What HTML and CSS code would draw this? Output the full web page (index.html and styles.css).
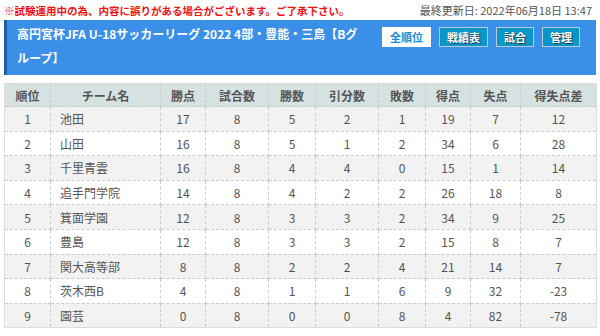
FILE: index.html
```html
<!DOCTYPE html>
<html lang="ja">
<head>
<meta charset="utf-8">
<link rel="stylesheet" href="styles.css">
</head>
<body>
<div class="page">
  <div class="topline">
    <span class="notice">※試験運用中の為、内容に誤りがある場合がございます。ご了承下さい。</span>
    <span class="updated">最終更新日: 2022年06月18日 13:47</span>
  </div>
  <div class="titlebox">
    <h1 class="title">高円宮杯JFA U-18サッカーリーグ 2022 4部・豊能・三島【Bグループ】</h1>
    <div class="btns">
      <span class="btn btn-active">全順位</span>
      <span class="btn">戦績表</span>
      <span class="btn">試合</span>
      <span class="btn">管理</span>
    </div>
  </div>
  <table class="standings">
    <colgroup>
      <col class="c1"><col class="c2"><col class="c3"><col class="c4"><col class="c5">
      <col class="c6"><col class="c7"><col class="c8"><col class="c9"><col class="c10">
    </colgroup>
    <thead>
      <tr><th>順位</th><th>チーム名</th><th>勝点</th><th>試合数</th><th>勝数</th><th>引分数</th><th>敗数</th><th>得点</th><th>失点</th><th>得失点差</th></tr>
    </thead>
    <tbody>
      <tr><td>1</td><td class="team">池田</td><td>17</td><td>8</td><td>5</td><td>2</td><td>1</td><td>19</td><td>7</td><td>12</td></tr>
      <tr><td>2</td><td class="team">山田</td><td>16</td><td>8</td><td>5</td><td>1</td><td>2</td><td>34</td><td>6</td><td>28</td></tr>
      <tr><td>3</td><td class="team">千里青雲</td><td>16</td><td>8</td><td>4</td><td>4</td><td>0</td><td>15</td><td>1</td><td>14</td></tr>
      <tr><td>4</td><td class="team">追手門学院</td><td>14</td><td>8</td><td>4</td><td>2</td><td>2</td><td>26</td><td>18</td><td>8</td></tr>
      <tr><td>5</td><td class="team">箕面学園</td><td>12</td><td>8</td><td>3</td><td>3</td><td>2</td><td>34</td><td>9</td><td>25</td></tr>
      <tr><td>6</td><td class="team">豊島</td><td>12</td><td>8</td><td>3</td><td>3</td><td>2</td><td>15</td><td>8</td><td>7</td></tr>
      <tr><td>7</td><td class="team">関大高等部</td><td>8</td><td>8</td><td>2</td><td>2</td><td>4</td><td>21</td><td>14</td><td>7</td></tr>
      <tr><td>8</td><td class="team">茨木西B</td><td>4</td><td>8</td><td>1</td><td>1</td><td>6</td><td>9</td><td>32</td><td>-23</td></tr>
      <tr><td>9</td><td class="team">園芸</td><td>0</td><td>8</td><td>0</td><td>0</td><td>8</td><td>4</td><td>82</td><td>-78</td></tr>
    </tbody>
  </table>
</div>
</body>
</html>
```
FILE: styles.css
```css
html, body {
  margin: 0;
  padding: 0;
  background: #ffffff;
}
body {
  font-family: "Noto Sans CJK JP", "Noto Sans", sans-serif;
  color: #555555;
}
.page {
  padding: 0 4px;
}
.topline {
  display: flex;
  justify-content: space-between;
  align-items: center;
  height: 18px;
  padding-top: 1px;
}
.notice {
  color: #ee1111;
  font-weight: bold;
  font-size: 10.5px;
}
.updated {
  color: #555555;
  font-size: 11px;
  padding-right: 4px;
}
.titlebox {
  margin-top: 1px;
  display: flex;
  align-items: flex-start;
  background: #3a8fe8;
  border-left: 3px solid #1b5ea6;
  height: 55px;
  box-sizing: border-box;
  padding: 2px 16px 0 10px;
}
.title {
  margin: 0;
  flex: 0 0 352px;
  color: #ffffff;
  font-size: 12px;
  font-weight: bold;
  line-height: 24px;
}
.btns {
  display: flex;
  gap: 8px;
  margin-top: 5px;
  margin-left: auto;
}
.btn {
  display: block;
  height: 20px;
  box-sizing: border-box;
  padding: 0 7px;
  background: #0b96c8;
  border: 1px solid #b9c9d6;
  color: #ffffff;
  font-size: 11px;
  font-weight: bold;
  line-height: 18px;
  text-shadow: 1px 1px 1px #1a3550;
}
.btn-active {
  background: #ffffff;
  color: #1a8bd8;
  text-shadow: none;
  border-color: #ffffff;
}
.standings {
  margin-top: 8px;
  width: 592px;
  border-collapse: collapse;
  table-layout: fixed;
  font-size: 12px;
  border: 1px solid #dcdcdc;
}
.c1 { width: 46px; }
.c2 { width: 110px; }
.c3 { width: 45px; }
.c4 { width: 63px; }
.c5 { width: 47px; }
.c6 { width: 63px; }
.c7 { width: 47px; }
.c8 { width: 45px; }
.c9 { width: 50px; }
.c10 { width: 76px; }
.standings th {
  background: #d6e1e1;
  color: #555555;
  font-weight: bold;
  height: 22px;
  padding: 0;
  border: 1px dashed #c4cccc;
  border-top: none;
}
.standings td {
  height: 23.6px;
  padding: 0;
  text-align: center;
  border: 1px dashed #cccccc;
}
.standings td.team {
  text-align: left;
  padding-left: 9px;
}
.standings tbody tr:nth-child(odd) {
  background: #f2f2f2;
}
.standings tbody tr:nth-child(even) {
  background: #ffffff;
}
```
